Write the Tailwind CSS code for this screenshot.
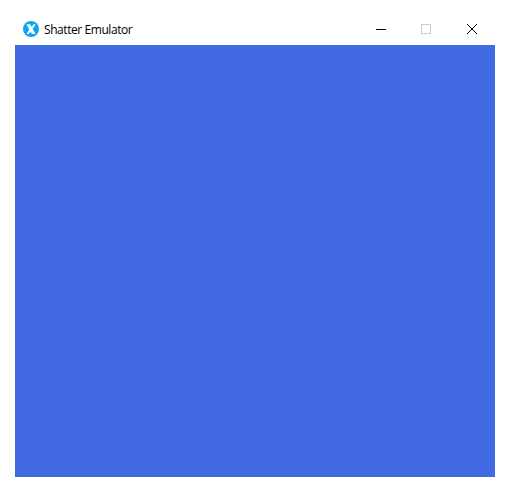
<!DOCTYPE html>
<html lang="en">
<head>
<meta charset="utf-8">
<title>Shatter Emulator</title>
<script src="https://cdn.jsdelivr.net/npm/@tailwindcss/browser@4"></script>
</head>
<body class="h-[492px] w-[510px] overflow-hidden bg-white px-[15px] pt-[14px] pb-[15px] font-['Open_Sans','Noto_Sans',sans-serif]">
<main class="flex h-[463px] flex-col">
<header class="mb-px flex h-[30px] shrink-0 items-center pl-2">
<svg class="size-4 shrink-0" viewBox="0 0 16 16" aria-hidden="true"><circle cx="8" cy="8" r="8" fill="#0ba5f0"/><path d="M3.4 3.2h3.8L12.6 13H8.8z" fill="#fff"/><path d="M10.5 3.2h2.1L9.9 7.8 8.8 6zM6.4 8.5l1.3 2.1L5.8 13H3.6z" fill="#fff"/></svg>
<h1 class="ml-[5px] whitespace-nowrap pt-[2px] text-[12px] leading-4 tracking-[-0.43px] text-black">Shatter Emulator</h1>
<div class="ml-auto flex">
<button class="flex h-[30px] w-[44px] items-center justify-center" aria-label="Minimize"><svg class="size-[10px]" viewBox="0 0 10 10" shape-rendering="crispEdges"><path d="M0 5h10v1H0z"/></svg></button>
<button class="flex h-[30px] w-[46px] items-center justify-center" aria-label="Maximize" disabled><svg class="size-[10px]" viewBox="0 0 10 10" shape-rendering="crispEdges"><path d="M.5.5h9v9h-9z" fill="none" stroke="#ccc"/></svg></button>
<button class="flex h-[30px] w-[46px] items-center justify-center" aria-label="Close"><svg class="size-[10px]" viewBox="0 0 10 10"><path d="M0 0l10 10M10 0L0 10" fill="none" stroke="#000"/></svg></button>
</div>
</header>
<section class="flex-1 bg-[#4169e1]"></section>
</main>
</body>
</html>
